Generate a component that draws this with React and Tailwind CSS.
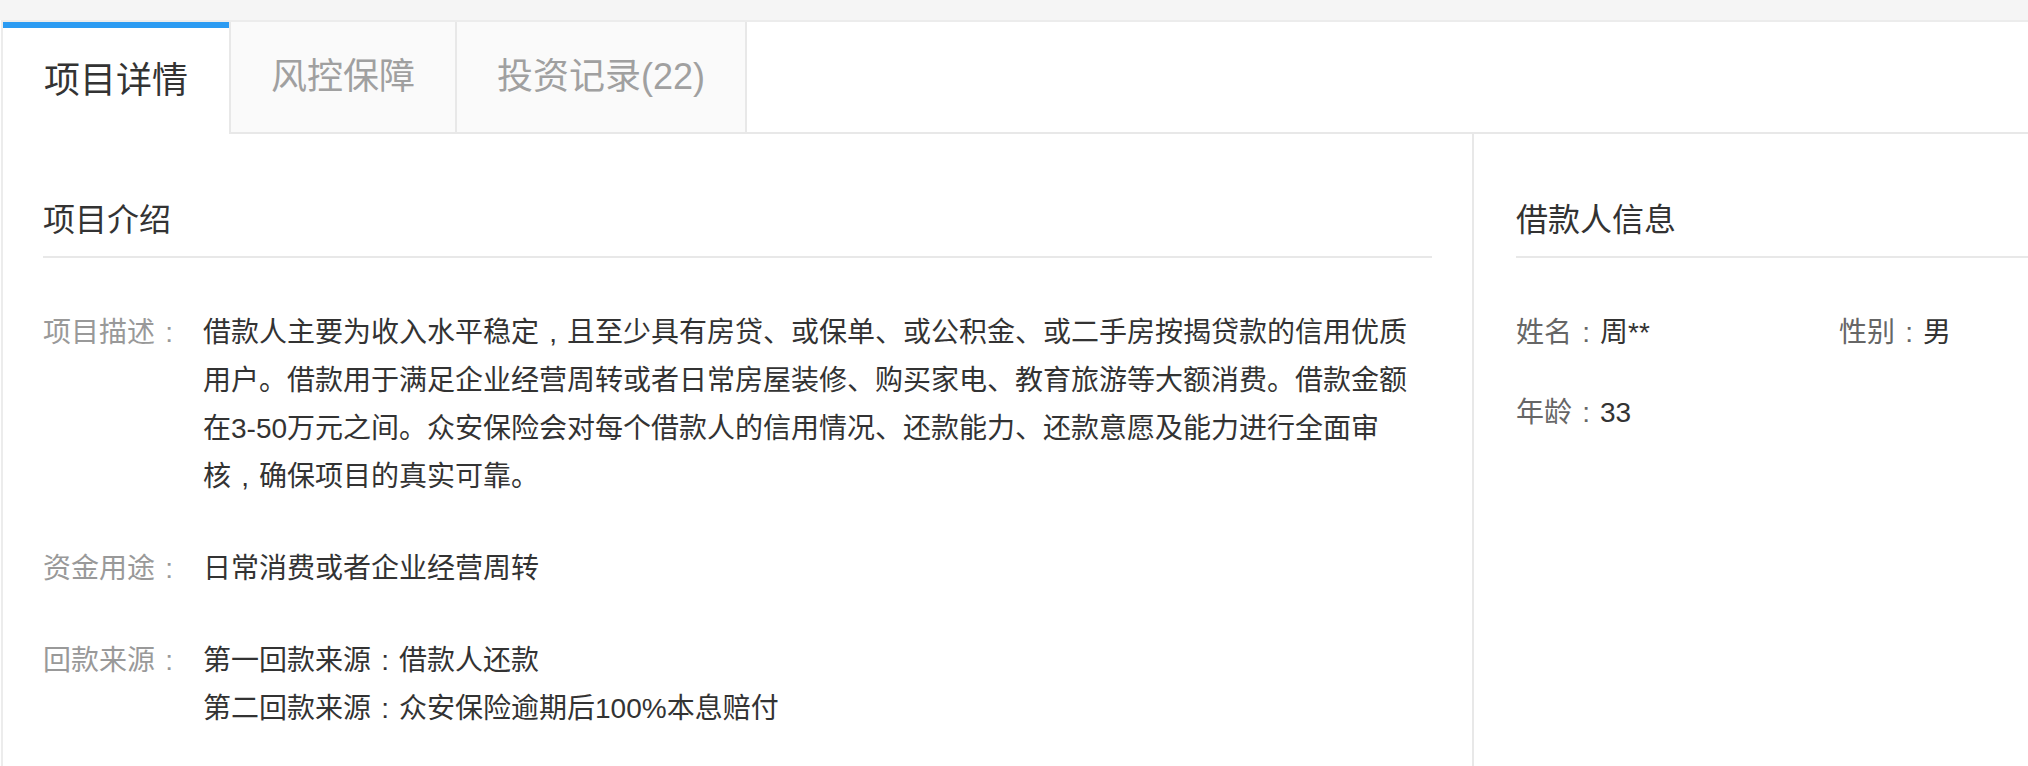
import React from 'react'

const tabs = [
    { name: '项目详情', w: 'w-[226px]' },
    { name: '风控保障', w: 'w-[226px]' },
    { name: '投资记录(22)', w: 'w-[292px]' },
]

// PingFang-style centered full-width punctuation
const Colon = () => <span className="inline-block w-[28px] text-center">:</span>
const Comma = () => <span className="inline-block w-[28px] text-center">,</span>

const descLines = [
    <>借款人主要为收入水平稳定<Comma />且至少具有房贷、或保单、或公积金、或二手房按揭贷款的信用优质</>,
    '用户。借款用于满足企业经营周转或者日常房屋装修、购买家电、教育旅游等大额消费。借款金额',
    '在3-50万元之间。众安保险会对每个借款人的信用情况、还款能力、还款意愿及能力进行全面审',
    <>核<Comma />确保项目的真实可靠。</>,
]

const Row = ({ label, lines }) => (
    <div className="flex mb-[44px] text-[28px] leading-[48px]">
        <div className="w-[160px] shrink-0 text-[#999]">
            {label}
            <Colon />
        </div>
        <div className="text-[#333] whitespace-nowrap">
            {lines.map((l, i) => (
                <div key={i}>{l}</div>
            ))}
        </div>
    </div>
)

const Info = ({ label, value }) => (
    <div>
        <span className="text-[#666]">
            {label}
            <Colon />
        </span>
        <span className="text-[#333]">{value}</span>
    </div>
)

const App = () => {
    const active = 0

    return (
        <div
            className="h-[766px] w-full overflow-hidden bg-white flex flex-col"
            style={{ fontFamily: '"Liberation Sans", "Noto Sans CJK SC", sans-serif' }}
        >
            <div className="h-[20px] bg-[#f5f5f5] shrink-0" />

            <div className="ml-px flex-1 flex flex-col border-t-2 border-l-2 border-[#ececec]">
                {/* tabs */}
                <div className="flex h-[112px] shrink-0">
                    {tabs.map((t, i) =>
                        i === active ? (
                            <div
                                key={t.name}
                                className={`${t.w} flex items-center justify-center border-t-[6px] border-[#2b9bf2] bg-white text-[36px] text-[#333]`}
                            >
                                {t.name}
                            </div>
                        ) : (
                            <div
                                key={t.name}
                                className={`${t.w} flex items-center justify-center border-l-2 border-b-2 border-[#e8e8e8] bg-[#fafafa] text-[36px] text-[#a0a0a0] ${i === tabs.length - 1 ? 'border-r-2' : ''}`}
                            >
                                {t.name}
                            </div>
                        )
                    )}
                    <div className="flex-1 border-b-2 border-[#e8e8e8]" />
                </div>

                <div className="flex flex-1">
                    {/* left: project intro */}
                    <div className="w-[1471px] shrink-0 border-r-2 border-[#e8e8e8] px-[40px]">
                        <div className="pt-[62px] pb-[12px] border-b-2 border-[#e8e8e8] text-[32px] leading-[48px] text-[#333]">
                            项目介绍
                        </div>
                        <div className="mt-[51px]">
                            <Row label="项目描述" lines={descLines} />
                            <Row label="资金用途" lines={['日常消费或者企业经营周转']} />
                            <Row
                                label="回款来源"
                                lines={[
                                    <>第一回款来源<Colon />借款人还款</>,
                                    <>第二回款来源<Colon />众安保险逾期后100%本息赔付</>,
                                ]}
                            />
                        </div>
                    </div>

                    {/* right: borrower */}
                    <div className="flex-1 pl-[42px]">
                        <div className="pt-[62px] pb-[12px] border-b-2 border-[#e8e8e8] text-[32px] leading-[48px] text-[#333]">
                            借款人信息
                        </div>
                        <div className="mt-[51px] grid grid-cols-[323px_323px] gap-y-[32px] text-[28px] leading-[48px]">
                            <Info label="姓名" value="周**" />
                            <Info label="性别" value="男" />
                            <Info label="年龄" value="33" />
                        </div>
                    </div>
                </div>
            </div>
        </div>
    )
}

export default App
